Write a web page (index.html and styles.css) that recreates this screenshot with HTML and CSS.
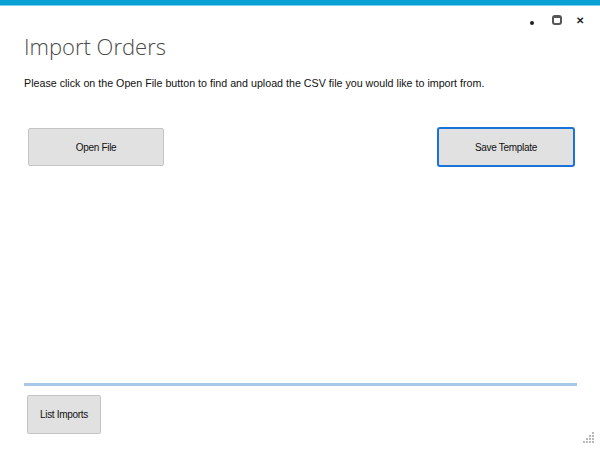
FILE: index.html
```html
<!DOCTYPE html>
<html lang="en">
<head>
    <meta charset="UTF-8">
    <meta name="viewport" content="width=device-width, initial-scale=1.0">
    <title>Import Orders</title>
    <link rel="stylesheet" href="styles.css">
</head>
<body>
    <div class="window">
        <div class="accent"></div>
        <div class="controls">
            <span class="ctl min"></span>
            <span class="ctl max"></span>
            <span class="ctl close">&#x2715;</span>
        </div>
        <div class="content">
            <h1>Import Orders</h1>
            <p class="hint">Please click on the Open File button to find and upload the CSV file you would like to import from.</p>
            <div class="actions">
                <button class="button">Open File</button>
                <button class="button focused">Save Template</button>
            </div>
        </div>
        <div class="footer">
            <button class="button small">List Imports</button>
        </div>
        <div class="grip">
            <svg width="12" height="12" viewBox="0 0 12 12">
                <rect x="9" y="1" width="2" height="2" fill="#b8b8b8"/>
                <rect x="6" y="4" width="2" height="2" fill="#b8b8b8"/>
                <rect x="9" y="4" width="2" height="2" fill="#b8b8b8"/>
                <rect x="3" y="7" width="2" height="2" fill="#b8b8b8"/>
                <rect x="6" y="7" width="2" height="2" fill="#b8b8b8"/>
                <rect x="9" y="7" width="2" height="2" fill="#b8b8b8"/>
                <rect x="0" y="10" width="2" height="2" fill="#b8b8b8"/>
                <rect x="3" y="10" width="2" height="2" fill="#b8b8b8"/>
                <rect x="6" y="10" width="2" height="2" fill="#b8b8b8"/>
                <rect x="9" y="10" width="2" height="2" fill="#b8b8b8"/>
            </svg>
        </div>
    </div>
</body>
</html>
```

FILE: styles.css
```css
body {
    margin: 0;
    font-family: "Open Sans", "Liberation Sans", sans-serif;
    background-color: #fff;
    color: #1a1a1a;
}
.window {
    position: relative;
    width: 600px;
    height: 450px;
    display: flex;
    flex-direction: column;
    overflow: hidden;
}
.accent {
    height: 5px;
    background-color: #0aa0d6;
    border-bottom: 1px solid #7fd0ee;
}
.controls {
    display: flex;
    justify-content: flex-end;
    align-items: center;
    gap: 14px;
    height: 16px;
    padding: 6px 16px 0 0;
}
.ctl {
    display: block;
    color: #222;
}
.min {
    width: 4px;
    height: 4px;
    margin-top: 6px;
    margin-right: 4px;
    background-color: #222;
    border-radius: 2px;
}
.max {
    width: 6px;
    height: 5px;
    border: 2px solid #555;
    border-top-width: 3px;
    border-radius: 3px;
}
.close {
    font-size: 10px;
    font-weight: bold;
    line-height: 10px;
}
.content {
    padding: 0 24px;
    flex: 1;
}
h1 {
    margin: 3px 0 0 0;
    font-weight: 300;
    font-size: 22px;
    line-height: 30px;
    color: #4a4a4a;
}
.hint {
    margin: 16px 0 0 0;
    font-family: "Liberation Sans", Arial, sans-serif;
    font-size: 10.7px;
    line-height: 12px;
    color: #111;
}
.actions {
    display: flex;
    justify-content: space-between;
    margin-top: 39px;
    padding: 0 1px 0 4px;
}
.button {
    width: 136px;
    height: 38px;
    font-family: "Liberation Sans", Arial, sans-serif;
    font-size: 10px;
    letter-spacing: -0.3px;
    color: #111;
    background-color: #e1e1e1;
    border: 1px solid #c4c4c4;
    border-radius: 2px;
    padding: 0;
}
.button.focused {
    width: 138px;
    height: 40px;
    margin-top: -1px;
    border: 2px solid #1a73d9;
    border-radius: 3px;
}
.footer {
    margin: 0 23px 16px 24px;
    border-top: 3px solid #a9c9e9;
    padding: 9px 0 0 3px;
}
.button.small {
    width: 74px;
    height: 39px;
}
.grip {
    position: absolute;
    right: 5px;
    bottom: 7px;
    line-height: 0;
}
```
